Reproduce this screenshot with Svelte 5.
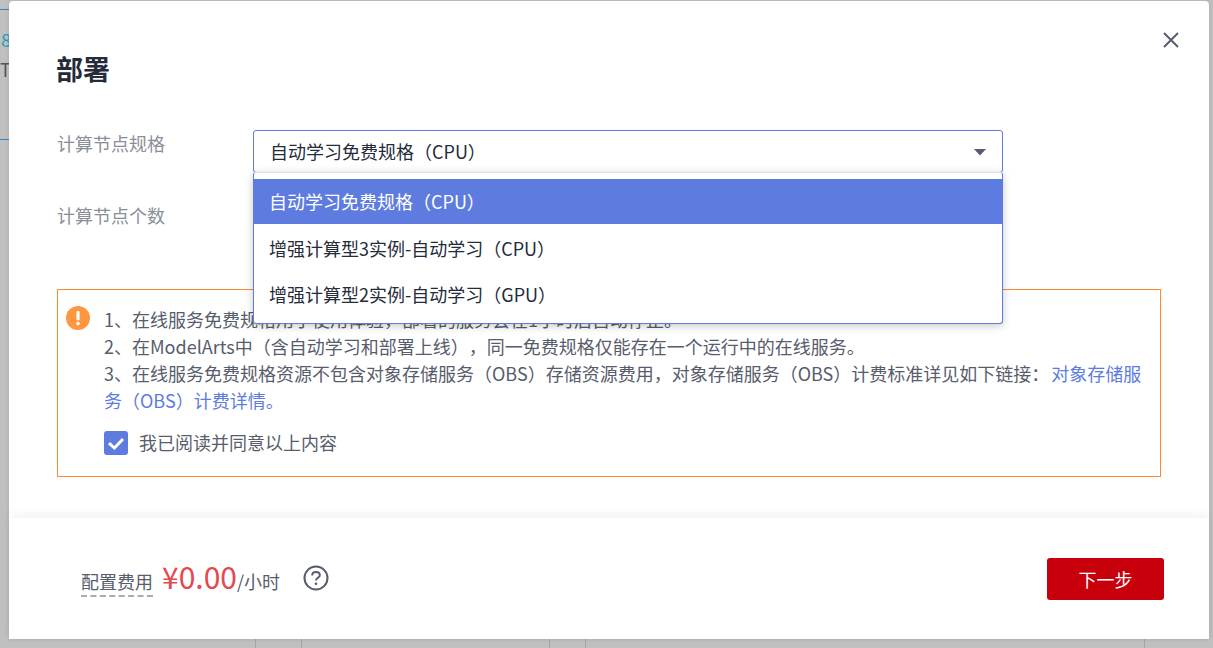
<script lang="ts">
	const options = ['自动学习免费规格（CPU）', '增强计算型3实例-自动学习（CPU）', '增强计算型2实例-自动学习（GPU）'];
	let selected = $state(0);
	let agreed = $state(true);
</script>

<div class="page">
	<!-- page behind the overlay -->
	<i class="bg hline" style="top:9px"></i>
	<i class="bg hline" style="top:139px"></i>
	<span class="bg num">8</span>
	<span class="bg letter">T</span>
	{#each [255, 301, 549, 585, 1144] as x}
		<i class="bg vline" style="left:{x}px"></i>
	{/each}

	<section class="modal">
		<button class="close" aria-label="关闭">
			<svg width="18" height="18" viewBox="0 0 18 18"><path d="M2 2 L16 16 M16 2 L2 16" stroke="#575d6c" stroke-width="2" fill="none" /></svg>
		</button>
		<div class="body">
			<h2>部署</h2>
			<div class="row first">
				<div class="label">计算节点规格</div>
				<div class="select-wrap">
					<div class="select">
						<span>{options[selected]}</span>
						<svg class="caret" width="14" height="8" viewBox="0 0 14 8"><path d="M1 1 H13 L7 7.5 Z" fill="#575d6c" /></svg>
					</div>
					<ul class="menu">
						{#each options as opt, i}
							<li class:active={i === selected}>{opt}</li>
						{/each}
					</ul>
				</div>
			</div>
			<div class="row second">
				<div class="label">计算节点个数</div>
			</div>

			<div class="alert">
				<svg class="warn" width="24" height="24" viewBox="0 0 24 24">
					<circle cx="12" cy="12" r="12" fill="#ff9640" />
					<rect x="10.4" y="5" width="3.2" height="9.5" rx="1.4" fill="#fff" />
					<circle cx="12" cy="17.6" r="1.8" fill="#fff" />
				</svg>
				<div class="notes">
					<p>1、在线服务免费规格用于使用体验，部署的服务会在1小时后自动停止。</p>
					<p>2、在ModelArts中（含自动学习和部署上线），同一免费规格仅能存在一个运行中的在线服务。</p>
					<p>3、在线服务免费规格资源不包含对象存储服务（OBS）存储资源费用，对象存储服务（OBS）计费标准详见如下链接： <a href="#top">对象存储服务（OBS）计费详情。</a></p>
					<label class="agree">
						<span class="check" class:on={agreed}>
							<svg width="24" height="24" viewBox="0 0 24 24"><path d="M5 12.2 L10.4 17 L19 8" stroke="#fff" stroke-width="3" fill="none" /></svg>
						</span>
						<span>我已阅读并同意以上内容</span>
					</label>
				</div>
			</div>
		</div>

		<footer>
			<div class="fee">
				<span class="fee-label">配置费用</span>
				<span class="price">¥0.00</span><span class="unit">/小时</span>
				<svg class="help" width="26" height="26" viewBox="0 0 26 26">
					<circle cx="13" cy="13" r="11.5" fill="none" stroke="#575d6c" stroke-width="2" />
					<path d="M9.2 10.4 C9.2 8.2 11 7 13 7 C15.2 7 16.8 8.3 16.8 10.2 C16.8 12.6 13 13 13 15.6" fill="none" stroke="#575d6c" stroke-width="2" />
					<circle cx="13" cy="18.8" r="1.3" fill="#575d6c" />
				</svg>
			</div>
			<button class="next">下一步</button>
		</footer>
	</section>
</div>

<style>
	:global(body) {
		margin: 0;
		background: #c0c0c0;
	}

	.page {
		position: relative;
		width: 1213px;
		height: 648px;
		overflow: hidden;
		background: #c0c0c0;
		font-family: "Noto Sans CJK SC", "Noto Sans", sans-serif;
		font-size: 18px;
		color: #252b3a;
		text-spacing-trim: space-all;
	}

	.bg {
		position: absolute;
	}
	.hline {
		left: 0;
		width: 9px;
		height: 1px;
		background: #3c7fc4;
	}
	.vline {
		bottom: 0;
		width: 1px;
		height: 9px;
		background: #a6a6a6;
	}
	.num {
		left: 1px;
		top: 26px;
		color: #1e9fc0;
		font-size: 18px;
	}
	.letter {
		left: 0;
		top: 56px;
		color: #555;
		font-size: 18px;
	}

	.modal {
		position: absolute;
		left: 9px;
		top: 1px;
		width: 1200px;
		height: 638px;
		background: #fff;
		border-radius: 4px 4px 0 0;
		display: flex;
		flex-direction: column;
		box-shadow: 0 0 4px rgba(0, 0, 0, 0.12);
	}

	.close {
		position: absolute;
		right: 29px;
		top: 30px;
		width: 18px;
		height: 18px;
		padding: 0;
		border: 0;
		background: none;
		display: flex;
	}

	.body {
		flex: 1;
		padding: 48px 48px 0;
	}

	h2 {
		margin: 0 0 0 -1px;
		font-size: 27px;
		line-height: 40px;
		font-weight: 700;
		color: #252b3a;
	}

	.row {
		display: flex;
	}
	.row.first {
		margin-top: 41px;
	}
	.row.second {
		margin-top: 29px;
		height: 87px;
	}
	.label {
		width: 196px;
		line-height: 27px;
		color: #8a8e99;
	}

	.select-wrap {
		position: relative;
		width: 750px;
	}
	.select {
		box-sizing: border-box;
		height: 43px;
		border: 1px solid #5e7ce0;
		border-radius: 3px;
		padding: 0 15px 2px 16px;
		display: flex;
		align-items: center;
		justify-content: space-between;
	}
	.caret {
		margin-top: 2px;
	}

	.menu {
		position: absolute;
		z-index: 2;
		left: 0;
		top: 42px;
		width: 750px;
		box-sizing: border-box;
		margin: 0;
		padding: 6px 0 0;
		height: 152px;
		list-style: none;
		background: #fff;
		border: 1px solid #5e7ce0;
		border-top-color: #dfe1e6;
		border-radius: 3px;
		box-shadow: 0 2px 8px rgba(0, 0, 0, 0.22);
	}
	.menu li {
		height: 45px;
		line-height: 45px;
		padding: 0 15px;
		margin-bottom: 1.5px;
	}
	.menu li.active {
		background: #5e7ce0;
		color: #fff;
	}

	.alert {
		box-sizing: border-box;
		height: 188px;
		border: 1px solid #ff8a33;
		padding: 16px 8px 0;
		display: flex;
		gap: 14px;
	}
	.warn {
		flex: none;
	}
	.notes {
		flex: 1;
		padding-right: 8px;
	}
	.notes p {
		margin: 0;
		line-height: 27px;
		color: #575d6c;
	}
	.notes a {
		color: #5e7ce0;
		text-decoration: none;
		margin-left: -2px;
	}
	.agree {
		display: flex;
		align-items: center;
		gap: 11px;
		margin-top: 15px;
		color: #575d6c;
		line-height: 27px;
	}
	.check {
		width: 24px;
		height: 24px;
		border-radius: 3px;
		display: flex;
		background: #fff;
	}
	.check.on {
		background: #5e7ce0;
	}

	footer {
		height: 121px;
		flex: none;
		box-sizing: border-box;
		padding: 0 45px 0 72px;
		display: flex;
		align-items: center;
		justify-content: space-between;
		background: #fff;
		box-shadow: 0 -4px 10px rgba(0, 0, 0, 0.05);
	}
	.fee {
		display: flex;
		align-items: baseline;
		margin-bottom: 5px;
	}
	.fee-label {
		color: #575d6c;
		border-bottom: 2px dashed #a8abb3;
		line-height: 20px;
		padding-bottom: 4px;
		margin-right: 9px;
	}
	.price {
		font-size: 30px;
		line-height: 40px;
		color: #e5484d;
	}
	.unit {
		color: #575d6c;
	}
	.help {
		margin-left: 23px;
		align-self: center;
		position: relative;
		top: 2px;
	}
	.next {
		width: 117px;
		height: 42px;
		border: 0;
		border-radius: 3px;
		background: #c7000b;
		color: #fff;
		font: inherit;
		padding: 0;
	}
</style>
